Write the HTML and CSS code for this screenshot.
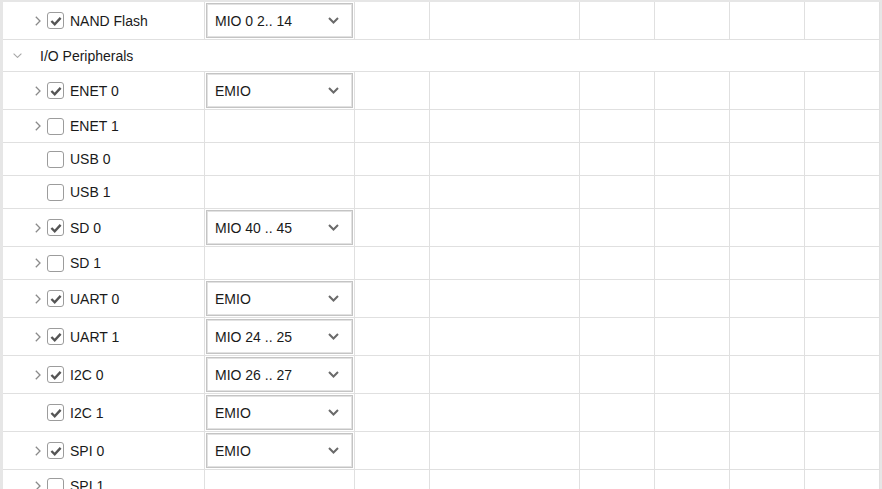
FILE: index.html
```html
<!DOCTYPE html>
<html>
<head>
<meta charset="utf-8">
<link rel="stylesheet" href="styles.css">
</head>
<body>
<div class="table">
  <div class="row tall">
    <div class="cell name"><span class="exp"><svg width="6" height="10" viewBox="0 0 6 10"><polyline points="0.8,0.8 5,5 0.8,9.2"/></svg></span><span class="cb on"><svg width="16" height="16" viewBox="0 0 16 16"><path d="M3.4 8 L6.7 11.3 L12.6 4.9"/></svg></span><span class="label">NAND Flash</span></div>
    <div class="cell sel"><div class="dd"><span>MIO 0 2.. 14</span><svg width="11" height="7" viewBox="0 0 11 7"><polyline points="1,1 5.5,5.5 10,1"/></svg></div></div>
    <div class="cell"></div><div class="cell"></div><div class="cell"></div><div class="cell"></div><div class="cell"></div><div class="cell"></div>
  </div>
  <div class="row group">
    <span class="gexp"><svg width="9" height="5" viewBox="0 0 9 5"><polyline points="0.6,0.6 4.5,4.4 8.4,0.6"/></svg></span><span class="glabel">I/O Peripherals</span>
  </div>
  <div class="row tall">
    <div class="cell name"><span class="exp"><svg width="6" height="10" viewBox="0 0 6 10"><polyline points="0.8,0.8 5,5 0.8,9.2"/></svg></span><span class="cb on"><svg width="16" height="16" viewBox="0 0 16 16"><path d="M3.4 8 L6.7 11.3 L12.6 4.9"/></svg></span><span class="label">ENET 0</span></div>
    <div class="cell sel"><div class="dd"><span>EMIO</span><svg width="11" height="7" viewBox="0 0 11 7"><polyline points="1,1 5.5,5.5 10,1"/></svg></div></div>
    <div class="cell"></div><div class="cell"></div><div class="cell"></div><div class="cell"></div><div class="cell"></div><div class="cell"></div>
  </div>
  <div class="row short">
    <div class="cell name"><span class="exp"><svg width="6" height="10" viewBox="0 0 6 10"><polyline points="0.8,0.8 5,5 0.8,9.2"/></svg></span><span class="cb"></span><span class="label">ENET 1</span></div>
    <div class="cell"></div><div class="cell"></div><div class="cell"></div><div class="cell"></div><div class="cell"></div><div class="cell"></div><div class="cell"></div>
  </div>
  <div class="row short">
    <div class="cell name"><span class="exp"></span><span class="cb"></span><span class="label">USB 0</span></div>
    <div class="cell"></div><div class="cell"></div><div class="cell"></div><div class="cell"></div><div class="cell"></div><div class="cell"></div><div class="cell"></div>
  </div>
  <div class="row short">
    <div class="cell name"><span class="exp"></span><span class="cb"></span><span class="label">USB 1</span></div>
    <div class="cell"></div><div class="cell"></div><div class="cell"></div><div class="cell"></div><div class="cell"></div><div class="cell"></div><div class="cell"></div>
  </div>
  <div class="row tall">
    <div class="cell name"><span class="exp"><svg width="6" height="10" viewBox="0 0 6 10"><polyline points="0.8,0.8 5,5 0.8,9.2"/></svg></span><span class="cb on"><svg width="16" height="16" viewBox="0 0 16 16"><path d="M3.4 8 L6.7 11.3 L12.6 4.9"/></svg></span><span class="label">SD 0</span></div>
    <div class="cell sel"><div class="dd"><span>MIO 40 .. 45</span><svg width="11" height="7" viewBox="0 0 11 7"><polyline points="1,1 5.5,5.5 10,1"/></svg></div></div>
    <div class="cell"></div><div class="cell"></div><div class="cell"></div><div class="cell"></div><div class="cell"></div><div class="cell"></div>
  </div>
  <div class="row short">
    <div class="cell name"><span class="exp"><svg width="6" height="10" viewBox="0 0 6 10"><polyline points="0.8,0.8 5,5 0.8,9.2"/></svg></span><span class="cb"></span><span class="label">SD 1</span></div>
    <div class="cell"></div><div class="cell"></div><div class="cell"></div><div class="cell"></div><div class="cell"></div><div class="cell"></div><div class="cell"></div>
  </div>
  <div class="row tall">
    <div class="cell name"><span class="exp"><svg width="6" height="10" viewBox="0 0 6 10"><polyline points="0.8,0.8 5,5 0.8,9.2"/></svg></span><span class="cb on"><svg width="16" height="16" viewBox="0 0 16 16"><path d="M3.4 8 L6.7 11.3 L12.6 4.9"/></svg></span><span class="label">UART 0</span></div>
    <div class="cell sel"><div class="dd"><span>EMIO</span><svg width="11" height="7" viewBox="0 0 11 7"><polyline points="1,1 5.5,5.5 10,1"/></svg></div></div>
    <div class="cell"></div><div class="cell"></div><div class="cell"></div><div class="cell"></div><div class="cell"></div><div class="cell"></div>
  </div>
  <div class="row tall">
    <div class="cell name"><span class="exp"><svg width="6" height="10" viewBox="0 0 6 10"><polyline points="0.8,0.8 5,5 0.8,9.2"/></svg></span><span class="cb on"><svg width="16" height="16" viewBox="0 0 16 16"><path d="M3.4 8 L6.7 11.3 L12.6 4.9"/></svg></span><span class="label">UART 1</span></div>
    <div class="cell sel"><div class="dd"><span>MIO 24 .. 25</span><svg width="11" height="7" viewBox="0 0 11 7"><polyline points="1,1 5.5,5.5 10,1"/></svg></div></div>
    <div class="cell"></div><div class="cell"></div><div class="cell"></div><div class="cell"></div><div class="cell"></div><div class="cell"></div>
  </div>
  <div class="row tall">
    <div class="cell name"><span class="exp"><svg width="6" height="10" viewBox="0 0 6 10"><polyline points="0.8,0.8 5,5 0.8,9.2"/></svg></span><span class="cb on"><svg width="16" height="16" viewBox="0 0 16 16"><path d="M3.4 8 L6.7 11.3 L12.6 4.9"/></svg></span><span class="label">I2C 0</span></div>
    <div class="cell sel"><div class="dd"><span>MIO 26 .. 27</span><svg width="11" height="7" viewBox="0 0 11 7"><polyline points="1,1 5.5,5.5 10,1"/></svg></div></div>
    <div class="cell"></div><div class="cell"></div><div class="cell"></div><div class="cell"></div><div class="cell"></div><div class="cell"></div>
  </div>
  <div class="row tall">
    <div class="cell name"><span class="exp"></span><span class="cb on"><svg width="16" height="16" viewBox="0 0 16 16"><path d="M3.4 8 L6.7 11.3 L12.6 4.9"/></svg></span><span class="label">I2C 1</span></div>
    <div class="cell sel"><div class="dd"><span>EMIO</span><svg width="11" height="7" viewBox="0 0 11 7"><polyline points="1,1 5.5,5.5 10,1"/></svg></div></div>
    <div class="cell"></div><div class="cell"></div><div class="cell"></div><div class="cell"></div><div class="cell"></div><div class="cell"></div>
  </div>
  <div class="row tall">
    <div class="cell name"><span class="exp"><svg width="6" height="10" viewBox="0 0 6 10"><polyline points="0.8,0.8 5,5 0.8,9.2"/></svg></span><span class="cb on"><svg width="16" height="16" viewBox="0 0 16 16"><path d="M3.4 8 L6.7 11.3 L12.6 4.9"/></svg></span><span class="label">SPI 0</span></div>
    <div class="cell sel"><div class="dd"><span>EMIO</span><svg width="11" height="7" viewBox="0 0 11 7"><polyline points="1,1 5.5,5.5 10,1"/></svg></div></div>
    <div class="cell"></div><div class="cell"></div><div class="cell"></div><div class="cell"></div><div class="cell"></div><div class="cell"></div>
  </div>
  <div class="row short">
    <div class="cell name"><span class="exp"><svg width="6" height="10" viewBox="0 0 6 10"><polyline points="0.8,0.8 5,5 0.8,9.2"/></svg></span><span class="cb"></span><span class="label">SPI 1</span></div>
    <div class="cell"></div><div class="cell"></div><div class="cell"></div><div class="cell"></div><div class="cell"></div><div class="cell"></div><div class="cell"></div>
  </div>
</div>
</body>
</html>
```
FILE: styles.css
```css
* { box-sizing: border-box; }
html, body { margin: 0; padding: 0; background: #fff; }
body {
  width: 882px;
  height: 489px;
  overflow: hidden;
  font-family: "Liberation Sans", Arial, sans-serif;
  font-size: 14px;
  color: #1a1a1a;
}
.table {
  width: 882px;
  border-top: 2px solid #e6e6e6;
  border-left: 3px solid #e6e6e6;
  border-right: 2px solid #e6e6e6;
}
.row {
  display: grid;
  grid-template-columns: 202px 150px 75px 150px 75px 75px 75px 75px;
  border-bottom: 1px solid #e0e0e0;
}
.row.tall { height: 38px; }
.row.short { height: 33px; }
.row.group {
  display: flex;
  align-items: center;
  height: 32px;
  border-right: 1px solid #e0e0e0;
}
.cell {
  border-right: 1px solid #e0e0e0;
  min-width: 0;
}
.name {
  display: flex;
  align-items: center;
  padding-left: 32px;
}
.exp {
  width: 6px;
  height: 10px;
  display: flex;
}
.exp svg polyline {
  fill: none;
  stroke: #8a8a8a;
  stroke-width: 1.3;
}
.cb {
  width: 17px;
  height: 17px;
  margin-left: 6px;
  border: 1.5px solid #9c9c9c;
  border-radius: 3px;
  background: #fff;
  display: flex;
  align-items: center;
  justify-content: center;
}
.cb svg { flex: none; }
.cb svg path {
  fill: none;
  stroke: #555;
  stroke-width: 2.4;
}
.label {
  margin-left: 6px;
  white-space: nowrap;
}
.gexp {
  margin-left: 10px;
  width: 9px;
  height: 5px;
  display: flex;
}
.gexp svg polyline {
  fill: none;
  stroke: #a8a8a8;
  stroke-width: 1.1;
}
.glabel {
  margin-left: 18px;
}
.sel { padding: 1px; }
.dd {
  height: 35px;
  border: 1px solid #c4c4c4;
  box-shadow: inset 0 0 0 1px #e2e2e2;
  display: flex;
  align-items: center;
  justify-content: space-between;
  padding: 0 13px 0 8px;
  background: #fff;
}
.dd svg polyline {
  fill: none;
  stroke: #6a6a6a;
  stroke-width: 2;
}
```
